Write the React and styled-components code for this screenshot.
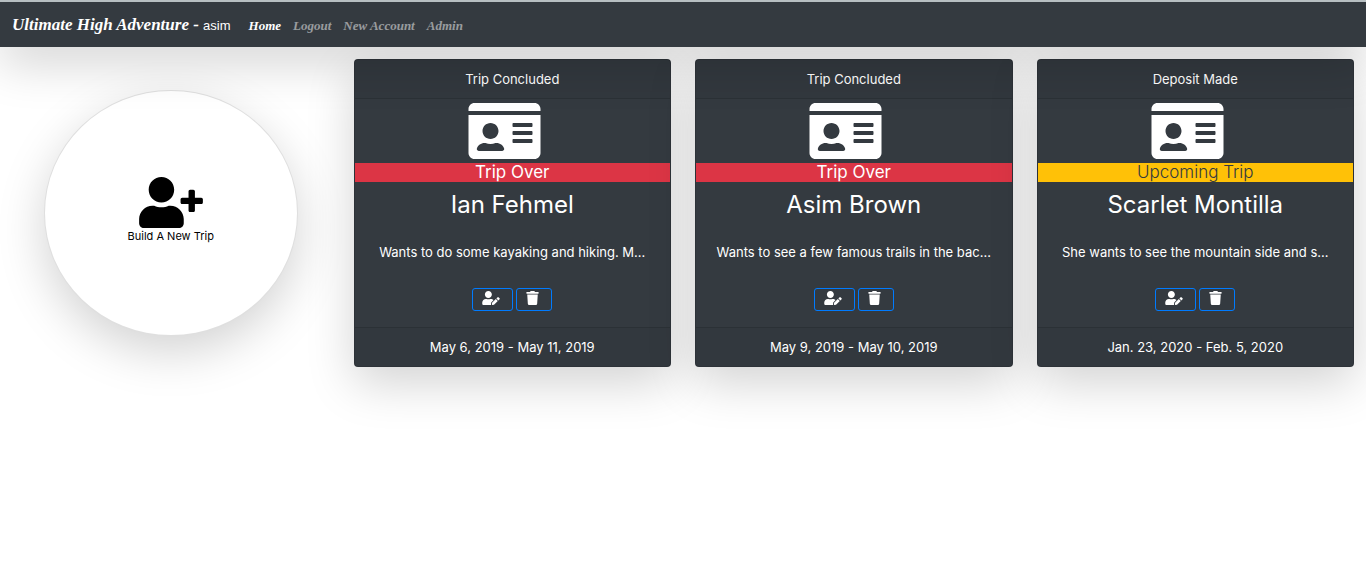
import React from "react";
import styled, { createGlobalStyle } from "styled-components";
import { FaIdCard, FaTrash, FaUserEdit, FaUserPlus } from "react-icons/fa";

const GlobalStyle = createGlobalStyle`
  *, *::before, *::after { box-sizing: border-box; }
  body {
    min-height: 100vh;
    margin: 0;
    background: #fff;
    color: #212529;
    font-family: Inter, "Open Sans", sans-serif;
    font-size: 13px;
    line-height: 20px;
  }
`;

const liftedShadow = "0 16px 48px rgba(0, 0, 0, 0.175)";

const Navbar = styled.nav`
  position: relative;
  z-index: 1;
  display: flex;
  align-items: center;
  gap: 18px;
  height: 47px;
  padding: 2px 12px 0;
  border-top: 2px solid #b7bfc2;
  background: #343a40;
  box-shadow: ${liftedShadow};
  font-family: "Liberation Serif", serif;
  font-style: italic;
  font-weight: 700;
  white-space: nowrap;
`;

const Brand = styled.a`
  color: #fff;
  font-size: 17px;
  text-decoration: none;
`;

const UserName = styled.span`
  font-family: "Liberation Sans", sans-serif;
  font-size: 13px;
  font-style: normal;
  font-weight: 400;
`;

const NavList = styled.ul`
  display: flex;
  gap: 12px;
  margin: 0;
  padding: 0;
  list-style: none;
`;

const NavLink = styled.a`
  color: ${({ $active }) => ($active ? "#fff" : "rgba(255, 255, 255, 0.5)")};
  font-size: 13px;
  text-decoration: none;
`;

const Deck = styled.main`
  display: grid;
  grid-template-columns: repeat(4, minmax(0, 1fr));
  align-items: start;
  gap: 24px;
  min-height: calc(100vh - 47px);
  padding: 12px;
`;

const NewTripLink = styled.a`
  display: flex;
  flex-direction: column;
  align-items: center;
  justify-content: center;
  justify-self: center;
  width: 80%;
  min-height: 246px;
  margin-top: 31px;
  padding-bottom: 6px;
  border: 1px solid rgba(0, 0, 0, 0.125);
  border-radius: 50%;
  background: #fff;
  box-shadow: ${liftedShadow};
  color: #000;
  font-size: 11px;
  line-height: 16px;
  text-decoration: none;

  svg { width: 64px; height: 51px; }
`;

const Card = styled.article`
  display: flex;
  flex-direction: column;
  border: 1px solid rgba(0, 0, 0, 0.125);
  border-radius: 4px;
  background: #343a40;
  box-shadow: ${liftedShadow};
  color: #fff;
  text-align: center;
`;

const CardHeader = styled.header`
  padding: 9px 20px;
  border-bottom: 1px solid rgba(0, 0, 0, 0.125);
  background: rgba(0, 0, 0, 0.03);
`;

const CardFooter = styled.footer`
  padding: 9px 20px;
  border-top: 1px solid rgba(0, 0, 0, 0.125);
  background: rgba(0, 0, 0, 0.03);
`;

const Portrait = styled.div`
  display: flex;
  justify-content: center;
  padding-right: 16px;

  svg { width: 73px; height: 64px; }
`;

const StatusBand = styled.div`
  background: ${({ $upcoming }) => ($upcoming ? "#ffc107" : "#dc3545")};
  color: ${({ $upcoming }) => ($upcoming ? "#343a40" : "#fff")};
  font-size: 17px;
  font-weight: ${({ $upcoming }) => ($upcoming ? 300 : 400)};
  line-height: 19px;
`;

const CardBody = styled.div`
  padding: 9px 12px 16px;
`;

const TravellerName = styled.h2`
  margin: 0 0 23px;
  font-size: 24px;
  font-weight: 400;
  line-height: 28px;
`;

const Summary = styled.p`
  margin: 0 0 26px;
  white-space: nowrap;
`;

const Actions = styled.div`
  display: flex;
  justify-content: center;
  gap: 3px;
`;

const ActionButton = styled.button`
  display: flex;
  padding: 2px 12px 5px 9px;
  border: 1px solid #007bff;
  border-radius: 3px;
  background: transparent;
  color: #fff;
  cursor: pointer;

  svg { width: ${({ $iconWidth }) => $iconWidth}px; height: 14px; }
`;

const links = ["Home", "Logout", "New Account", "Admin"];

const trips = [
  {
    stage: "Trip Concluded",
    status: "Trip Over",
    name: "Ian Fehmel",
    summary: "Wants to do some kayaking and hiking. M…",
    dates: "May 6, 2019 - May 11, 2019",
  },
  {
    stage: "Trip Concluded",
    status: "Trip Over",
    name: "Asim Brown",
    summary: "Wants to see a few famous trails in the bac…",
    dates: "May 9, 2019 - May 10, 2019",
  },
  {
    stage: "Deposit Made",
    status: "Upcoming Trip",
    upcoming: true,
    name: "Scarlet Montilla",
    summary: "She wants to see the mountain side and s…",
    dates: "Jan. 23, 2020 - Feb. 5, 2020",
  },
];

function TripCard({ trip }) {
  return (
    <Card>
      <CardHeader>{trip.stage}</CardHeader>
      <Portrait>
        <FaIdCard aria-hidden="true" />
      </Portrait>
      <StatusBand $upcoming={trip.upcoming}>{trip.status}</StatusBand>
      <CardBody>
        <TravellerName>{trip.name}</TravellerName>
        <Summary>{trip.summary}</Summary>
        <Actions>
          <ActionButton type="button" aria-label="Edit trip" $iconWidth={18}>
            <FaUserEdit />
          </ActionButton>
          <ActionButton type="button" aria-label="Delete trip" $iconWidth={13}>
            <FaTrash />
          </ActionButton>
        </Actions>
      </CardBody>
      <CardFooter>{trip.dates}</CardFooter>
    </Card>
  );
}

export default function App() {
  return (
    <>
      <GlobalStyle />
      <Navbar>
        <Brand href="#">
          Ultimate High Adventure - <UserName>asim</UserName>
        </Brand>
        <NavList>
          {links.map((label, i) => (
            <li key={label}>
              <NavLink href="#" $active={i === 0}>
                {label}
              </NavLink>
            </li>
          ))}
        </NavList>
      </Navbar>
      <Deck>
        <NewTripLink href="#">
          <FaUserPlus aria-hidden="true" />
          Build A New Trip
        </NewTripLink>
        {trips.map((trip) => (
          <TripCard key={trip.name} trip={trip} />
        ))}
      </Deck>
    </>
  );
}
